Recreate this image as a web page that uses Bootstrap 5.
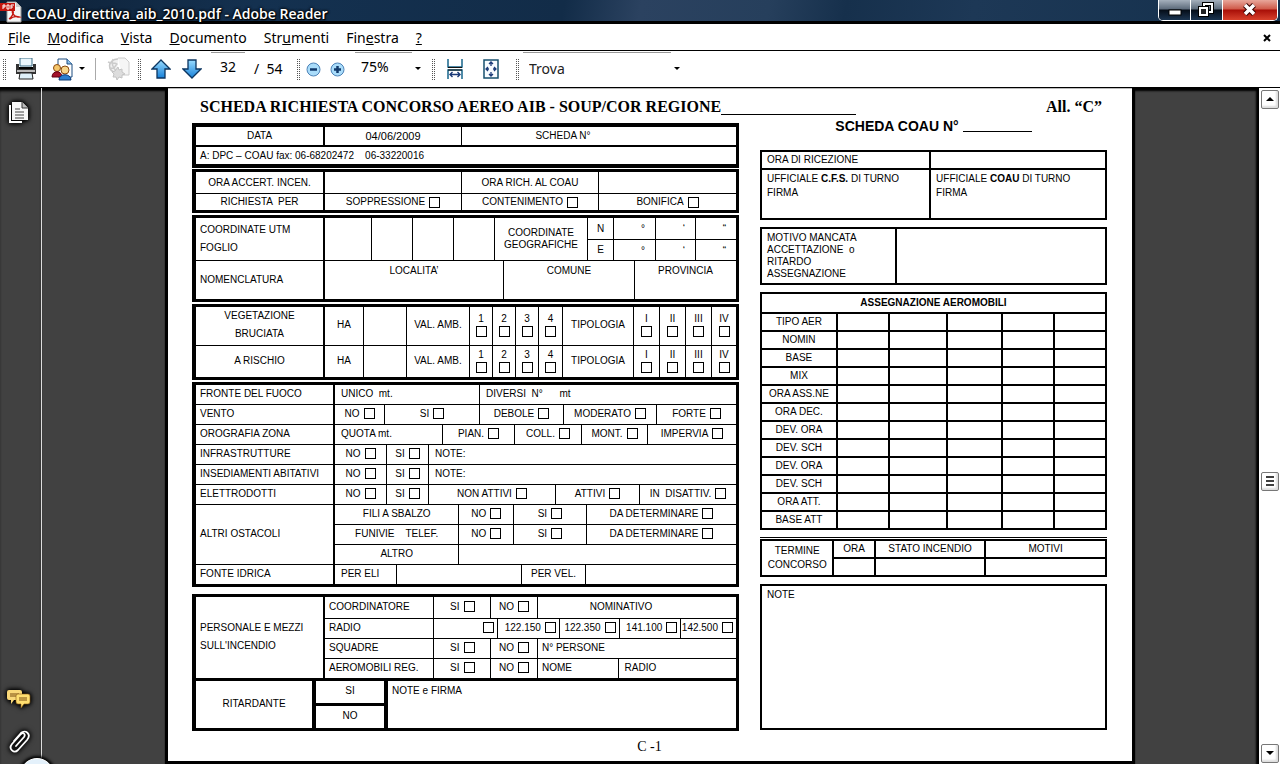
<!DOCTYPE html>
<html lang="it">
<head>
<meta charset="utf-8">
<meta name="viewport" content="width=device-width, initial-scale=1">
<title>COAU_direttiva_aib_2010.pdf - Adobe Reader</title>
<link href="https://cdn.jsdelivr.net/npm/bootstrap@5.3.0/dist/css/bootstrap.min.css" rel="stylesheet">
<style>
body{font-family:"Noto Sans","Open Sans",sans-serif;font-size:14px;line-height:20px;color:#000;background:#fff}
button{border:0;background:none;padding:0;color:inherit}
svg{display:block}
/* window chrome */
.titlebar{height:24px;background:linear-gradient(100deg,#0d2036 0,#143150 20%,#122c48 44%,#2b4260 50%,#263f5c 60%,#16304c 66%,#1d3856 76%,#14304c 100%);border-bottom:3px solid #000;color:#fff}
.titlebar h1{font-size:14px;line-height:20px;font-weight:600;padding-left:5px;font-family:"Open Sans","Noto Sans",sans-serif;text-shadow:0 0 3px #000,0 0 3px #000,1px 1px 1px #000}
.winbtns{height:21px;border:1px solid #fff;border-top:0;border-radius:0 0 5px 5px;overflow:hidden;margin-right:2px;background:#0a1522}
.winbtns button{width:32px;background:linear-gradient(#a5b0bc 0,#5d6b7b 45%,#050d18 50%,#1b3450 100%);border-right:1px solid #fff}
.winbtns .shut{width:54px;border-right:0;background:linear-gradient(#e8a79b 0,#cf5a4a 45%,#a80f08 50%,#d8412c 100%)}
.menubar{height:27px;border-top:1px solid #fff;border-bottom:1px solid #000;gap:17px;padding:0 8px}
.menubar a{color:#000;text-decoration:none;line-height:24px}
.menubar .x{width:9px}
.toolbar{height:37px;border-bottom:1px solid #000;padding-left:3px}
.toolbar>*{flex:none}
.toolbar button{height:34px;display:flex;align-items:center;justify-content:center}
.grip{width:4px;height:21px;background:linear-gradient(90deg,transparent 1px,#fff 1px 2px,transparent 2px 3px,#fff 3px),repeating-linear-gradient(#555 0 1px,#fff 1px 2px)}
.b-s{width:24px}.b-m{width:34px}.b-l{width:38px}.b-c{width:12px}.b-t{width:6px}
.g-a{margin-left:2px}.g-b{margin-left:8px}
.vsep{width:1px;height:22px;background:#aaa;margin-left:10px}
.toolbar input{height:34px;border:0;border-top:1px solid #999;background:#fff;padding:0 6px 6px;line-height:20px;outline:0;border-radius:0}
.pg{width:34px;margin-left:7px;text-align:center}
.tot{width:52px;padding-left:9px}
.zm{width:57px;margin-left:6px}
.toolbar .fd{width:148px;margin-left:3px;padding-bottom:2px;color:#222}
.fd::placeholder{color:#222;opacity:1}
/* viewer */
.viewer{background:#414141;overflow:hidden}
.side{width:42px;border-right:1px solid #ddd;box-shadow:inset 0 4px 3px -1px #000;padding:12px 3px 8px 0}
.side button{width:100%;display:flex;justify-content:center;filter:drop-shadow(0 0 2px #000) drop-shadow(0 0 2px #000)}
.notesbtn{margin-bottom:20px}
.orb{bottom:-27px;left:20px;width:34px;height:34px;border-radius:50%;background:#e4f1fb;border:1px solid #fff;box-shadow:0 0 3px 2px #000}
.canvas{padding:0 127px 4px 126px;box-shadow:inset 0 4px 2px -1px #000,inset -4px 0 2px -1px #000}
.sheet{background:#fff;box-shadow:0 0 1px 3px #000;border-top:1px solid #bbb;padding:8px 25px 4px 24px;font-family:"Liberation Sans",Arial,sans-serif;font-size:10px;line-height:12px}
.scroll{width:21px;background:#fff;padding:2px 1px 2px 2px}
.scroll button{width:18px;height:19px;border:1px solid #777;border-radius:2px;box-shadow:inset -2px -2px 2px #ddd;display:flex;align-items:center;justify-content:center}
.up-gap{flex:364}.dn-gap{flex:253}
/* sheet heading */
.serif{font-family:"Liberation Serif","Times New Roman",serif;font-weight:700}
.sheet h2,.sheet .annex{font-size:16px;line-height:20px;margin:0}
.heading{padding:0 5px 0 8px}
.rule{border-bottom:1px solid #000}
.rule-a{width:135px;height:18px}.rule-b{width:69px;height:14px}
.sheet h3{font-size:14px;line-height:16px;font-weight:700;gap:4px;margin:1px 0 16px}
.cols{display:grid;grid-template-columns:547fr 347fr;gap:21px}
.leftcol{gap:2px;padding-top:6px}
.pageno{font-size:14px;line-height:20px;font-weight:400;margin-top:6px}
/* form blocks */
.blk{border:3px solid #000;border-left-width:4px}
.blk-a{border-width:4px 3px 4px 4px;margin-bottom:-1px}
.blk-p{margin-top:5px}
.ln{display:grid}
.ln+.ln,.sub>.ln+.ln{border-top:1px solid #000}
.ln>*{display:flex;align-items:center;justify-content:center;border-left:1px solid #000;min-width:0;white-space:nowrap}
.hi .ln>:not(.sub){padding-bottom:2px}
.ln>:first-child{border-left:0}
.key+*{border-left-width:2px!important}
.ln>.s{justify-content:flex-start;padding-left:4px}
.ln>.sw{justify-content:flex-start;padding-left:6px}
.ln>.t{align-items:flex-start;padding-top:4px}
.ln>.e{justify-content:flex-end;padding-right:3px}
.ln>.sub{display:grid;align-items:stretch;justify-content:stretch}
.ln>.two{line-height:18px;text-align:left;white-space:normal}
.ln>.sno{padding-right:72px}
.ln>.nom{padding-right:32px}
.pre{white-space:pre!important}
label{display:inline-flex;align-items:center;gap:4px}
label.v{flex-direction:column;gap:1px}
.ln>.deg{justify-content:flex-end;align-items:flex-start;padding:5px 10px 0 0}
input[type=checkbox]{appearance:none;width:11px;height:11px;border:1px solid #000;margin:0;flex:none;background:#fff}
input[type=checkbox]:checked{background:#000}
.h17{min-height:17px}.h18{min-height:18px}.h19{min-height:19px}.h20{min-height:20px}.h21{min-height:21px}.h32{min-height:32px}.h37{min-height:37px}.h39{min-height:39px}.h50{min-height:50px}
.ln.heavy{border-top-width:2px!important}
.ln.max{border-top-width:3px!important}
.date{font-size:11px}
.c-date{grid-template-columns:127fr 138fr 275fr}
.c-req{grid-template-columns:127fr 138fr 137fr 138fr}
.c-utm{grid-template:21px 21px/127fr 48fr 41fr 41fr 41fr 93fr 26fr 42fr 40fr 41fr}
.c-utm>:nth-child(-n+6){grid-row:span 2}
.c-utm>:nth-child(n+11){border-top:1px solid #000}
.c-utm>:nth-child(11){grid-column:7}
.c-loc{grid-template-columns:127fr 180fr 131fr 102fr}
.c-veg{grid-template-columns:127fr 40fr 43fr 63fr 23fr 23fr 23fr 24fr 71fr 26fr 26fr 26fr 25fr}
.c-fro{grid-template-columns:137fr 146fr 257fr}
.c-ven{grid-template-columns:137fr 51fr 95fr 84fr 93fr 80fr}
.c-oro{grid-template-columns:137fr 109fr 72fr 67fr 66fr 89fr}
.c-inf{grid-template-columns:137fr 53fr 42fr 308fr}
.c-ele{grid-template-columns:137fr 53fr 42fr 127fr 84fr 97fr}
.c-alt{grid-template-columns:137fr 403fr}
.c-fil{grid-template-columns:124fr 55fr 73fr 151fr}
.c-oth{grid-template-columns:124fr 279fr}
.c-fon{grid-template-columns:137fr 63fr 125fr 64fr 151fr}
.c-per{grid-template-columns:127fr 413fr}
.c-coo{grid-template-columns:109fr 57fr 47fr 200fr}
.c-rad{grid-template-columns:109fr 64fr 62fr 60fr 62fr 56fr}
.c-aer{grid-template-columns:109fr 57fr 47fr 81fr 119fr}
.c-rit{grid-template-columns:116fr 72fr 352fr}
.c-rit>*+*{border-left-width:4px!important}
/* right column */
.rtab{width:100%;table-layout:fixed;border-collapse:collapse;margin-bottom:7px}
.rtab td,.rtab th{border:2px solid #000;padding:0 5px;height:18px;font-weight:400;vertical-align:middle}
.rtab thead th{font-weight:700;text-align:center;height:20px}
.rtab .top{vertical-align:top;line-height:14px;padding-top:2px}
.rtab .l50{height:50px}.rtab .l56{height:56px;white-space:nowrap}
.k-rec{width:49%}.k-mot{width:39%}
.asg tbody th,.fin th{text-align:center}
.rtab.asg th{padding-left:2px;padding-right:2px}
.asg .k1{width:22%}.asg .k2{width:15%}.asg .k3{width:17%}.asg .k4{width:16%}.asg .k5{width:15%}
.fin{border-top:1px solid #000;padding-top:1px;margin-bottom:7px}
.fin .rtab{margin:0}
.fin .rtab .two{line-height:14px;padding:0}
.fin .k1{width:21%}.fin .k2{width:12%}.fin .k3{width:32%}
.notes{border:2px solid #000;padding:3px 5px;min-height:146px}
</style>
</head>
<body class="d-flex flex-column min-vh-100">
<header>
<div class="titlebar d-flex align-items-start">
 <svg class="flex-shrink-0" width="22" height="23" viewBox="0 0 22 23"><path d="M7 2h9l5 5v15H7z" fill="#f4f4f4" stroke="#999"/><path d="M16 2v5h5" fill="#ccc"/><rect width="15" height="8" y="3" fill="#c4160f"/><path d="M3 5v4M3 5h2v2H3M7 5v4h2V5zM11 9V5h3M11 7h2" stroke="#fff" fill="none"/><path d="M9 19c3-2 5-6 4-8-2 0 1 7 6 6-3-1-7 0-9 2" fill="none" stroke="#c4160f" stroke-width="1.5"/></svg>
 <h1 class="mb-0 pt-1 flex-grow-1">COAU_direttiva_aib_2010.pdf - Adobe Reader</h1>
 <div class="winbtns d-flex">
  <button aria-label="Riduci"><svg width="31" height="20"><rect x="10" y="10" width="12" height="5" fill="#fff" stroke="#000"/></svg></button>
  <button aria-label="Ripristina"><svg width="31" height="20"><path d="M13 4h8v8h-8z" fill="none" stroke="#000" stroke-width="4"/><path d="M13 4h8v8h-8z" fill="none" stroke="#fff" stroke-width="2"/><path d="M9 8h7v7H9z" fill="#111" stroke="#000" stroke-width="4"/><path d="M9 8h7v7H9z" fill="#222" stroke="#fff" stroke-width="2"/></svg></button>
  <button class="shut" aria-label="Chiudi"><svg width="54" height="20"><path d="M22 5l9 9M31 5l-9 9" stroke="#300" stroke-width="5.500"/><path d="M22 5l9 9M31 5l-9 9" stroke="#fff" stroke-width="3.500"/></svg></button>
 </div>
</div>
<nav class="menubar d-flex align-items-center">
 <a href="#"><u>F</u>ile</a><a href="#"><u>M</u>odifica</a><a href="#"><u>V</u>ista</a><a href="#"><u>D</u>ocumento</a><a href="#">Str<u>u</u>menti</a><a href="#">Fin<u>e</u>stra</a><a href="#"><u>?</u></a>
 <button class="x ms-auto" aria-label="Chiudi documento"><svg width="8" height="8"><path d="M1 1l6 6M7 1L1 7" stroke="#000" stroke-width="2"/></svg></button>
</nav>
<div class="toolbar d-flex align-items-center">
 <span class="grip"></span>
 <button class="b-l" aria-label="Stampa"><svg width="22" height="22" viewBox="0 0 22 22"><path d="M5 0h12v8H5z" fill="#eaf6fc" stroke="#3a6c86"/><path d="M1 6h3v3h14V6h3v10H1z" fill="#333"/><path d="M2 12h18v2H2z" fill="#bbb"/><path d="M4 10h14" stroke="#000" stroke-width="2"/><path d="M5 15h12l1 6H4z" fill="#dff1fa" stroke="#222"/></svg></button>
 <button class="b-m" aria-label="Collabora"><svg width="23" height="23" viewBox="0 0 23 23"><path d="M7 1h9l5 5v13H7z" fill="#fff" stroke="#1c4d80"/><path d="M16 1v5h5" fill="#8fc1ea" stroke="#1c4d80"/><circle cx="6" cy="10" r="3.500" fill="#f5c66a" stroke="#8a4a10"/><path d="M1 19c0-7 10-7 10 0z" fill="#a3122a" stroke="#610010"/><circle cx="14" cy="12" r="4" fill="#f8d68a" stroke="#8a4a10"/><path d="M8 22c0-7 12-7 12 0z" fill="#2d7fd0" stroke="#0d3a75"/></svg></button>
 <button class="b-t" aria-label="Opzioni"><svg width="6" height="4"><path d="M0 0h6L3 3z"/></svg></button>
 <span class="vsep"></span>
 <button class="b-l g-a" disabled aria-label="Web"><svg width="26" height="24" viewBox="0 0 26 24"><path d="M14 1h7l4 4v13h-7" fill="#f5f5f5" stroke="#ccc"/><path d="M14 2a8 7 0 1 0-1 14" fill="#f1f1f1" stroke="#c8c8c8" stroke-width="1.500"/><path d="M4 5c4 2 6 0 9 2-3 3-2 5-7 4M9 2c-2 5 0 8 3 12" fill="none" stroke="#ccc" stroke-width="1.500"/><path d="M14 10l1 3 3-1 0 3 3 2-3 1 0 3-3-1-2 3-1-3-3 0 1-3-2-2 3-1z" fill="#ddd" stroke="#c4c4c4"/></svg></button>
 <span class="grip g-a"></span>
 <button class="b-l" aria-label="Pagina precedente"><svg width="20" height="20" viewBox="0 0 20 20"><defs><linearGradient id="bl" x2="0" y2="1"><stop stop-color="#9adcff"/><stop offset="1" stop-color="#1680d8"/></linearGradient></defs><path d="M10 1l9 9h-5v9H6v-9H1z" fill="url(#bl)" stroke="#0b3560" stroke-width="1.300"/></svg></button>
 <button class="b-s" aria-label="Pagina successiva"><svg width="20" height="20" viewBox="0 0 20 20"><path d="M10 19l9-9h-5V1H6v9H1z" fill="url(#bl)" stroke="#0b3560" stroke-width="1.300"/></svg></button>
 <input class="pg" aria-label="Pagina" value="32"><span class="tot pre">/  54</span>
 <span class="grip"></span>
 <button class="b-s" aria-label="Zoom indietro"><svg width="15" height="15"><circle cx="7.500" cy="7.500" r="6.500" fill="#a9dcfa" stroke="#4d83b8"/><path d="M4 7.500h7" stroke="#123a6c" stroke-width="2.500"/></svg></button>
 <button class="b-s" aria-label="Zoom avanti"><svg width="15" height="15"><circle cx="7.500" cy="7.500" r="6.500" fill="#a9dcfa" stroke="#4d83b8"/><path d="M4 7.500h7M7.500 4v7" stroke="#123a6c" stroke-width="2.500"/></svg></button>
 <input class="zm" aria-label="Zoom" value="75%"><button class="b-c" aria-label="Livelli di zoom"><svg width="6" height="4"><path d="M0 0h6L3 3z"/></svg></button>
 <span class="grip g-b"></span>
 <button class="b-l" aria-label="Adatta larghezza"><svg width="17" height="21" viewBox="0 0 17 21"><path d="M1 0v8h14V0M1 20v-9h14v9" fill="none" stroke="#17658c" stroke-width="1.500"/><path d="M1 11h14M1 8.500h14" stroke="#111"/><path d="M3 15.500h10M5.500 13L3 15.500 5.500 18M10.500 13l2.500 2.500-2.500 2.500" fill="none" stroke="#1b3a78" stroke-width="1.400"/></svg></button>
 <button class="b-m" aria-label="Pagina intera"><svg width="17" height="21" viewBox="0 0 17 21"><path d="M1 1h14v18H1z" fill="#f8fcff" stroke="#17506f" stroke-width="1.500"/><path d="M8 3v4M6 5l2-2 2 2M8 17v-4M6 15l2 2 2-2M3 10h3M5 8l-2 2 2 2M13 10h-3M11 8l2 2-2 2" fill="none" stroke="#1b3a78" stroke-width="1.300"/></svg></button>
 <span class="grip g-b"></span>
 <input class="fd" aria-label="Trova" placeholder="Trova"><button class="b-c" aria-label="Opzioni di ricerca"><svg width="6" height="4"><path d="M0 0h6L3 3z"/></svg></button>
</div>
</header>

<main class="viewer d-flex flex-grow-1 position-relative">
<aside class="side flex-shrink-0 d-flex flex-column">
 <button aria-label="Pagine"><svg width="22" height="26" viewBox="0 0 22 26"><path d="M2 5v17h12" fill="none" stroke="#fff" stroke-width="2"/><path d="M4 2h10l6 6v12H4z" fill="#f6f6f6"/><path d="M14 2v6h6" fill="#bbb" stroke="#333"/><path d="M7 9h5M7 12h9M7 15h9M7 18h9" stroke="#444"/></svg></button>
 <button class="mt-auto notesbtn" aria-label="Commenti"><svg width="26" height="20" viewBox="0 0 26 20"><path d="M3 1h11q2 0 2 2v6q0 2-2 2H8l-3 4V11H3q-2 0-2-2V3q0-2 2-2z" fill="#f9d878"/><path d="M4 5h9M4 7h7" stroke="#7a4c10"/><path d="M12 5h10q2 0 2 2v6q0 2-2 2h-4l-3 4v-4h-3q-2 0-2-2V7q0-2 2-2z" fill="#ffdf70" stroke="#8a5a14" stroke-width=".6"/><path d="M13 9h8M13 11h8" stroke="#7a4c10"/></svg></button>
 <button class="mb-1" aria-label="Allegati"><svg width="22" height="24" viewBox="0 0 22 24"><path d="M8 16l8-9c2-3-1-5-3-3l-9 10c-4 5 2 10 6 6l9-10c5-6-2-11-6-7l-7 8" transform="translate(0 1)" fill="none" stroke="#fff" stroke-width="1.800" stroke-linecap="round"/></svg></button>
</aside>
<span class="orb position-absolute"></span>
<div class="canvas flex-grow-1">
<article class="sheet h-100">
 <div class="heading d-flex">
  <h2 class="serif text-nowrap">SCHEDA RICHIESTA CONCORSO AEREO AIB - SOUP/COR REGIONE</h2><span class="rule rule-a"></span>
  <span class="annex serif ms-auto">All. “C”</span>
 </div>
 <div class="cols">
 <section class="leftcol d-flex flex-column">
  <div class="blk blk-a">
   <div class="ln c-date h18"><div class="key">DATA</div><div class="date">04/06/2009</div><div class="sno">SCHEDA N°</div></div>
   <div class="ln heavy h19"><div class="s pre">A: DPC – COAU fax: 06-68202472    06-33220016</div></div>
  </div>
  <div class="blk">
   <div class="ln c-req h21"><div class="key">ORA ACCERT. INCEN.</div><div></div><div>ORA RICH. AL COAU</div><div></div></div>
   <div class="ln c-req h17"><div class="key pre">RICHIESTA  PER</div><div><label>SOPPRESSIONE<input type="checkbox"></label></div><div><label>CONTENIMENTO<input type="checkbox"></label></div><div><label>BONIFICA<input type="checkbox"></label></div></div>
  </div>
  <div class="blk">
   <div class="ln c-utm"><div class="key s two">COORDINATE UTM<br>FOGLIO</div><div></div><div></div><div></div><div></div><div class="text-center">COORDINATE<br>GEOGRAFICHE</div><div>N</div><div class="deg">°</div><div class="deg">‘</div><div class="deg">“</div><div>E</div><div class="deg">°</div><div class="deg">‘</div><div class="deg">“</div></div>
   <div class="ln c-loc h39"><div class="key s">NOMENCLATURA</div><div class="t">LOCALITA’</div><div class="t">COMUNE</div><div class="t">PROVINCIA</div></div>
  </div>
  <div class="blk hi">
   <div class="ln c-veg h37"><div class="key two text-center">VEGETAZIONE<br>BRUCIATA</div><div>HA</div><div></div><div>VAL. AMB.</div><div><label class="v">1<input type="checkbox"></label></div><div><label class="v">2<input type="checkbox"></label></div><div><label class="v">3<input type="checkbox"></label></div><div><label class="v">4<input type="checkbox"></label></div><div>TIPOLOGIA</div><div><label class="v">I<input type="checkbox"></label></div><div><label class="v">II<input type="checkbox"></label></div><div><label class="v">III<input type="checkbox"></label></div><div><label class="v">IV<input type="checkbox"></label></div></div>
   <div class="ln c-veg h32"><div class="key">A RISCHIO</div><div>HA</div><div></div><div>VAL. AMB.</div><div><label class="v">1<input type="checkbox"></label></div><div><label class="v">2<input type="checkbox"></label></div><div><label class="v">3<input type="checkbox"></label></div><div><label class="v">4<input type="checkbox"></label></div><div>TIPOLOGIA</div><div><label class="v">I<input type="checkbox"></label></div><div><label class="v">II<input type="checkbox"></label></div><div><label class="v">III<input type="checkbox"></label></div><div><label class="v">IV<input type="checkbox"></label></div></div>
  </div>
  <div class="blk hi">
   <div class="ln c-fro h19"><div class="key s">FRONTE DEL FUOCO</div><div class="sw pre">UNICO  mt.</div><div class="sw pre">DIVERSI  N°      mt</div></div>
   <div class="ln c-ven h20"><div class="key s">VENTO</div><div><label>NO<input type="checkbox"></label></div><div><label>SI<input type="checkbox"></label></div><div><label>DEBOLE<input type="checkbox"></label></div><div><label>MODERATO<input type="checkbox"></label></div><div><label>FORTE<input type="checkbox"></label></div></div>
   <div class="ln c-oro h20"><div class="key s">OROGRAFIA ZONA</div><div class="sw">QUOTA mt.</div><div><label>PIAN.<input type="checkbox"></label></div><div><label>COLL.<input type="checkbox"></label></div><div><label>MONT.<input type="checkbox"></label></div><div><label>IMPERVIA<input type="checkbox"></label></div></div>
   <div class="ln c-inf h20"><div class="key s">INFRASTRUTTURE</div><div><label>NO<input type="checkbox"></label></div><div><label>SI<input type="checkbox"></label></div><div class="sw">NOTE:</div></div>
   <div class="ln c-inf h20"><div class="key s">INSEDIAMENTI ABITATIVI</div><div><label>NO<input type="checkbox"></label></div><div><label>SI<input type="checkbox"></label></div><div class="sw">NOTE:</div></div>
   <div class="ln c-ele h20"><div class="key s">ELETTRODOTTI</div><div><label>NO<input type="checkbox"></label></div><div><label>SI<input type="checkbox"></label></div><div><label>NON ATTIVI<input type="checkbox"></label></div><div><label>ATTIVI<input type="checkbox"></label></div><div><label class="pre">IN  DISATTIV.<input type="checkbox"></label></div></div>
   <div class="ln c-alt"><div class="key s">ALTRI OSTACOLI</div><div class="sub">
     <div class="ln c-fil h19"><div>FILI A SBALZO</div><div><label>NO<input type="checkbox"></label></div><div><label>SI<input type="checkbox"></label></div><div><label>DA DETERMINARE<input type="checkbox"></label></div></div>
     <div class="ln c-fil h20"><div class="pre">FUNIVIE    TELEF.</div><div><label>NO<input type="checkbox"></label></div><div><label>SI<input type="checkbox"></label></div><div><label>DA DETERMINARE<input type="checkbox"></label></div></div>
     <div class="ln c-oth h20"><div>ALTRO</div><div></div></div></div></div>
   <div class="ln c-fon h20"><div class="key s">FONTE IDRICA</div><div class="sw">PER ELI</div><div></div><div>PER VEL.</div><div></div></div>
  </div>
  <div class="blk blk-p hi">
   <div class="ln c-per"><div class="key s two">PERSONALE E MEZZI<br>SULL'INCENDIO</div><div class="sub">
     <div class="ln c-coo h21"><div class="s">COORDINATORE</div><div><label>SI<input type="checkbox"></label></div><div><label>NO<input type="checkbox"></label></div><div class="nom">NOMINATIVO</div></div>
     <div class="ln c-rad h20"><div class="s">RADIO</div><div class="e"><input type="checkbox" aria-label="Radio"></div><div class="e"><label>122.150<input type="checkbox"></label></div><div class="e"><label>122.350<input type="checkbox"></label></div><div class="e"><label>141.100<input type="checkbox"></label></div><div class="e"><label>142.500<input type="checkbox"></label></div></div>
     <div class="ln c-coo h20"><div class="s">SQUADRE</div><div><label>SI<input type="checkbox"></label></div><div><label>NO<input type="checkbox"></label></div><div class="s">N° PERSONE</div></div>
     <div class="ln c-aer h20"><div class="s">AEROMOBILI REG.</div><div><label>SI<input type="checkbox"></label></div><div><label>NO<input type="checkbox"></label></div><div class="s">NOME</div><div class="sw">RADIO</div></div></div></div>
   <div class="ln c-rit max h50"><div>RITARDANTE</div><div class="sub"><div class="ln"><div>SI</div></div><div class="ln max"><div>NO</div></div></div><div class="s t">NOTE e FIRMA</div></div>
  </div>
 </section>
 <section>
  <h3 class="d-flex text-nowrap justify-content-center"><span>SCHEDA COAU N°</span><span class="rule rule-b"></span></h3>
  <table class="rtab"><colgroup><col class="k-rec"><col></colgroup>
   <tr><th>ORA DI RICEZIONE</th><td></td></tr>
   <tr><td class="top l50">UFFICIALE <b>C.F.S.</b> DI TURNO<br>FIRMA</td><td class="top l50">UFFICIALE <b>COAU</b> DI TURNO<br>FIRMA</td></tr></table>
  <table class="rtab"><colgroup><col class="k-mot"><col></colgroup>
   <tr><th class="l56">MOTIVO MANCATA<br>ACCETTAZIONE &nbsp;o<br>RITARDO<br>ASSEGNAZIONE</th><td></td></tr></table>
  <table class="rtab asg"><colgroup><col class="k1"><col class="k2"><col class="k3"><col class="k4"><col class="k5"><col></colgroup>
   <thead><tr><th colspan="6">ASSEGNAZIONE AEROMOBILI</th></tr></thead>
   <tbody>
   <tr><th>TIPO AER</th><td></td><td></td><td></td><td></td><td></td></tr>
   <tr><th>NOMIN</th><td></td><td></td><td></td><td></td><td></td></tr>
   <tr><th>BASE</th><td></td><td></td><td></td><td></td><td></td></tr>
   <tr><th>MIX</th><td></td><td></td><td></td><td></td><td></td></tr>
   <tr><th class="text-nowrap">ORA ASS.NE</th><td></td><td></td><td></td><td></td><td></td></tr>
   <tr><th>ORA DEC.</th><td></td><td></td><td></td><td></td><td></td></tr>
   <tr><th>DEV. ORA</th><td></td><td></td><td></td><td></td><td></td></tr>
   <tr><th>DEV. SCH</th><td></td><td></td><td></td><td></td><td></td></tr>
   <tr><th>DEV. ORA</th><td></td><td></td><td></td><td></td><td></td></tr>
   <tr><th>DEV. SCH</th><td></td><td></td><td></td><td></td><td></td></tr>
   <tr><th>ORA ATT.</th><td></td><td></td><td></td><td></td><td></td></tr>
   <tr><th>BASE ATT</th><td></td><td></td><td></td><td></td><td></td></tr>
   </tbody></table>
  <div class="fin"><table class="rtab"><colgroup><col class="k1"><col class="k2"><col class="k3"><col></colgroup>
   <tr><th rowspan="2" class="two">TERMINE<br>CONCORSO</th><th>ORA</th><th>STATO INCENDIO</th><th>MOTIVI</th></tr>
   <tr><td></td><td></td><td></td></tr></table></div>
  <div class="notes">NOTE</div>
 </section>
 </div>
 <div class="serif pageno text-center">C -1</div>
</article>
</div>
<div class="scroll flex-shrink-0 d-flex flex-column">
 <button aria-label="Su"><svg width="8" height="5"><path d="M0 4h8L4 0z"/></svg></button><span class="up-gap"></span>
 <button aria-label="Posizione"><svg width="9" height="11"><path d="M0 1h8M0 5h8M0 9h8" stroke="#000" stroke-width="1.500"/></svg></button><span class="dn-gap"></span>
 <button aria-label="Giù"><svg width="8" height="5"><path d="M0 0h8L4 4z"/></svg></button>
</div>
</main>
<script src="https://cdn.jsdelivr.net/npm/bootstrap@5.3.0/dist/js/bootstrap.bundle.min.js"></script>
</body>
</html>
